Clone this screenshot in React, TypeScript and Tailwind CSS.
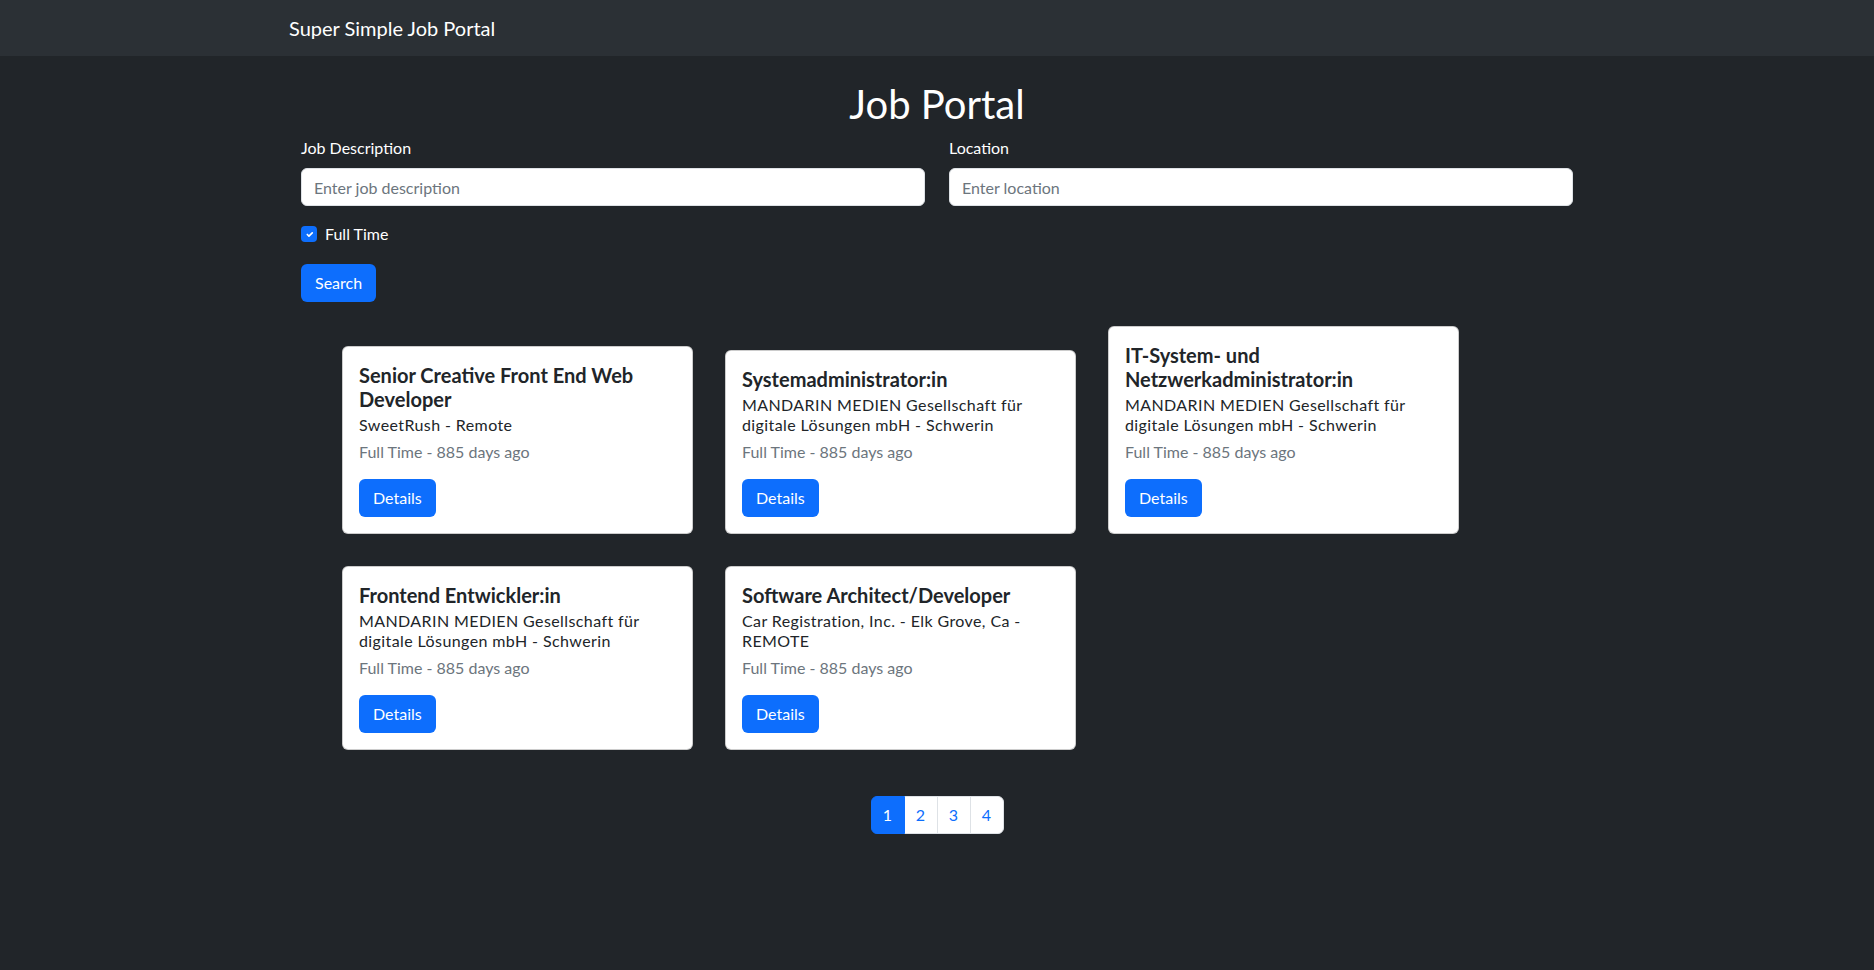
import React, { useState } from 'react';

type Job = {
  id: number;
  title: string;
  company: string;
  location: string;
  type: string;
  age: string;
};

const JOBS: Job[] = [
  { id: 1, title: 'Senior Creative Front End Web Developer', company: 'SweetRush', location: 'Remote', type: 'Full Time', age: '885 days ago' },
  { id: 2, title: 'Systemadministrator:in', company: 'MANDARIN MEDIEN Gesellschaft für digitale Lösungen mbH', location: 'Schwerin', type: 'Full Time', age: '885 days ago' },
  { id: 3, title: 'IT-System- und Netzwerkadministrator:in', company: 'MANDARIN MEDIEN Gesellschaft für digitale Lösungen mbH', location: 'Schwerin', type: 'Full Time', age: '885 days ago' },
  { id: 4, title: 'Frontend Entwickler:in', company: 'MANDARIN MEDIEN Gesellschaft für digitale Lösungen mbH', location: 'Schwerin', type: 'Full Time', age: '885 days ago' },
  { id: 5, title: 'Software Architect/Developer', company: 'Car Registration, Inc.', location: 'Elk Grove, Ca - REMOTE', type: 'Full Time', age: '885 days ago' },
];

function JobCard({ job }: { job: Job }) {
  return (
    <div className="w-[351px] bg-white rounded-md border border-black/20 p-4 text-[#212529]">
      <h5 className="text-xl font-bold leading-6 mb-2">{job.title}</h5>
      <h6 className="text-base leading-5 tracking-[0.4px] -mt-1 mb-[7px]">
        {job.company} - {job.location}
      </h6>
      <h6 className="text-base leading-[1.2] mb-[18px] text-[#6c757d]">
        {job.type} - {job.age}
      </h6>
      <button className="h-[38px] px-[14px] rounded-md bg-[#0d6efd] text-white text-base">Details</button>
    </div>
  );
}

export default function App() {
  const [fullTime, setFullTime] = useState(true);
  const [page, setPage] = useState(1);

  return (
    <div className="min-h-screen bg-[#212529] text-white font-['Lato',sans-serif]">
      {/* Navbar */}
      <nav className="h-14 bg-[#2b3035]">
        <div className="w-[1320px] mx-auto px-3 h-full flex items-center">
          <span className="text-xl">Super Simple Job Portal</span>
        </div>
      </nav>

      <div className="w-[1320px] mx-auto px-3">
        <h1 className="text-center text-[40px] leading-[48px] mt-6 mb-2">Job Portal</h1>

        {/* Search form */}
        <div className="grid grid-cols-2">
          <div className="px-3">
            <label className="block leading-6 mb-2">Job Description</label>
            <input
              className="w-full h-[38px] rounded-md border border-[#dee2e6] bg-white px-3 text-[#212529] placeholder:text-[#6c757d] outline-none"
              placeholder="Enter job description"
            />
            <label className="flex items-center gap-2 mt-4 h-6 mb-0.5 cursor-pointer" onClick={() => setFullTime(!fullTime)}>
              <span className={`w-4 h-4 rounded flex items-center justify-center ${fullTime ? 'bg-[#0d6efd]' : 'bg-white'}`}>
                {fullTime && (
                  <svg width="11" height="11" viewBox="0 0 20 20">
                    <path d="M6 10l3 3 6-6" fill="none" stroke="#fff" strokeWidth="3" strokeLinecap="round" strokeLinejoin="round" />
                  </svg>
                )}
              </span>
              <span>Full Time</span>
            </label>
            <button className="mt-4 h-[38px] px-[14px] rounded-md bg-[#0d6efd] text-white">Search</button>
          </div>
          <div className="px-3">
            <label className="block leading-6 mb-2">Location</label>
            <input
              className="w-full h-[38px] rounded-md border border-[#dee2e6] bg-white px-3 text-[#212529] placeholder:text-[#6c757d] outline-none"
              placeholder="Enter location"
            />
          </div>
        </div>

        {/* Job cards */}
        <div className="mt-6 pl-[53px] flex flex-wrap items-end gap-8">
          {JOBS.map(job => (
            <JobCard key={job.id} job={job} />
          ))}
        </div>

        {/* Pagination */}
        <div className="mt-[46px] flex justify-center">
          <div className="flex">
            {[1, 2, 3, 4].map((n, i) => (
              <button
                key={n}
                onClick={() => setPage(n)}
                className={`w-[34px] h-[38px] border text-base ${i > 0 ? '-ml-px' : ''} ${
                  i === 0 ? 'rounded-l-md' : ''
                } ${i === 3 ? 'rounded-r-md' : ''} ${
                  page === n ? 'bg-[#0d6efd] border-[#0d6efd] text-white relative z-10' : 'bg-white border-[#dee2e6] text-[#0d6efd]'
                }`}
              >
                {n}
              </button>
            ))}
          </div>
        </div>
      </div>
    </div>
  );
}
